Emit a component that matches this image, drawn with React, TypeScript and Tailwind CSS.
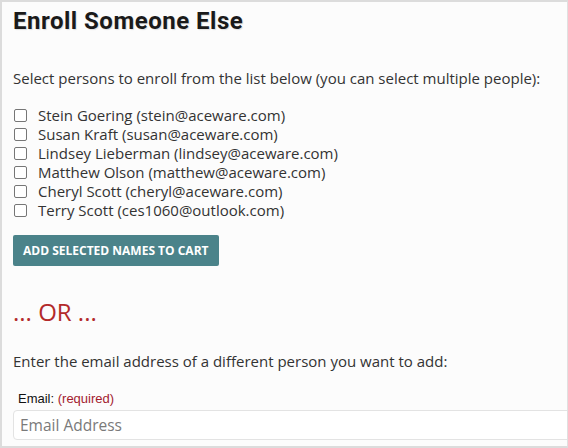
import React, { useState } from 'react';

const people = [
    { name: 'Stein Goering', email: 'stein@aceware.com' },
    { name: 'Susan Kraft', email: 'susan@aceware.com' },
    { name: 'Lindsey Lieberman', email: 'lindsey@aceware.com' },
    { name: 'Matthew Olson', email: 'matthew@aceware.com' },
    { name: 'Cheryl Scott', email: 'cheryl@aceware.com' },
    { name: 'Terry Scott', email: 'ces1060@outlook.com' },
];

const App: React.FC = () => {
    const [selected, setSelected] = useState<string[]>([]);
    const [email, setEmail] = useState('');

    const toggle = (addr: string) => {
        setSelected(prev => (prev.includes(addr) ? prev.filter(p => p !== addr) : [...prev, addr]));
    };

    return (
        <div className="w-[568px] h-[448px] overflow-hidden bg-[#fcfcfc] border-2 border-[#dcdcdc] border-r border-r-[#e0e0e0] font-['Open_Sans',sans-serif] text-[#333]">
            <div className="pl-[11px] pt-[4px]">
                {/* heading */}
                <h2 className="font-['Roboto',sans-serif] font-bold text-[24px] leading-[30px] tracking-[0.5px] text-[#1a1a1a] [text-shadow:1px_1px_1px_rgba(0,0,0,0.12)]">
                    Enroll Someone Else
                </h2>

                <p className="mt-[32px] text-[15px] leading-[20px] whitespace-nowrap">
                    Select persons to enroll from the list below (you can select multiple people):
                </p>

                {/* people list */}
                <div className="mt-[18px] flex flex-col">
                    {people.map(p => (
                        <label key={p.email} className="flex items-center h-[19px] text-[15px] cursor-pointer whitespace-nowrap">
                            <input
                                type="checkbox"
                                checked={selected.includes(p.email)}
                                onChange={() => toggle(p.email)}
                                className="shrink-0 w-[13px] h-[13px] ml-[1px] mr-[11px] appearance-none border border-[#767676] rounded-[2px] bg-white checked:bg-[#4a8289]"
                            />
                            <span>
                                {p.name} ({p.email})
                            </span>
                        </label>
                    ))}
                </div>

                <button className="mt-[15px] h-[31px] px-[10px] rounded-[2px] bg-[#4b838a] text-white font-bold text-[12px] uppercase">
                    Add Selected Names to Cart
                </button>

                <div className="mt-[31px] text-[#b32a2a] text-[24px] leading-[30px]">... OR ...</div>

                <p className="mt-[24px] text-[15px] leading-[20px]">
                    Enter the email address of a different person you want to add:
                </p>

                {/* email field */}
                <div className="mt-[20px]">
                    <div className="pl-[5px] font-['Liberation_Sans',Arial,sans-serif] text-[13px] leading-[16px] text-[#111]">
                        Email: <span className="text-[#a31b2e]">(required)</span>
                    </div>
                    <input
                        type="text"
                        value={email}
                        onChange={e => setEmail(e.target.value)}
                        placeholder="Email Address"
                        className="mt-[3px] w-[600px] h-[30px] px-[6px] bg-white border border-[#e3e3e3] rounded-[4px] text-[15.5px] text-[#333] placeholder:text-[#7a7a7a] outline-none"
                    />
                </div>
            </div>
        </div>
    );
};

export default App;
